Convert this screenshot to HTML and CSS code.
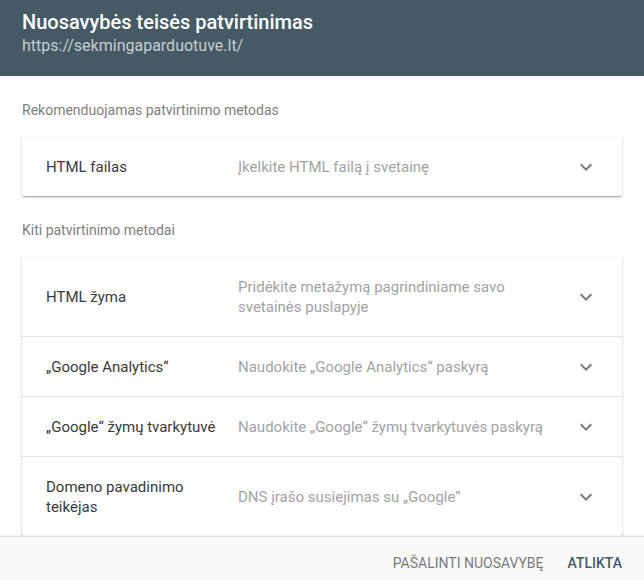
FILE: index.html
```html
<!DOCTYPE html>
<html lang="lt">
<head>
<meta charset="utf-8">
<link rel="stylesheet" href="styles.css">
</head>
<body>
<div class="dialog">
  <header class="head">
    <div class="title">Nuosavybės teisės patvirtinimas</div>
    <div class="url">https://sekmingaparduotuve.lt/</div>
  </header>
  <main class="content">
    <div class="section-label">Rekomenduojamas patvirtinimo metodas</div>
    <div class="card">
      <div class="row">
        <div class="name">HTML failas</div>
        <div class="desc">Įkelkite HTML failą į svetainę</div>
        <svg class="chev" viewBox="0 0 24 24"><path d="M7.41 8.59 12 13.17l4.59-4.58L18 10l-6 6-6-6z"/></svg>
      </div>
    </div>
    <div class="section-label">Kiti patvirtinimo metodai</div>
    <div class="card">
      <div class="row">
        <div class="name">HTML žyma</div>
        <div class="desc">Pridėkite metažymą pagrindiniame savo svetainės puslapyje</div>
        <svg class="chev" viewBox="0 0 24 24"><path d="M7.41 8.59 12 13.17l4.59-4.58L18 10l-6 6-6-6z"/></svg>
      </div>
      <div class="row">
        <div class="name">„Google Analytics“</div>
        <div class="desc">Naudokite „Google Analytics“ paskyrą</div>
        <svg class="chev" viewBox="0 0 24 24"><path d="M7.41 8.59 12 13.17l4.59-4.58L18 10l-6 6-6-6z"/></svg>
      </div>
      <div class="row">
        <div class="name">„Google“ žymų tvarkytuvė</div>
        <div class="desc">Naudokite „Google“ žymų tvarkytuvės paskyrą</div>
        <svg class="chev" viewBox="0 0 24 24"><path d="M7.41 8.59 12 13.17l4.59-4.58L18 10l-6 6-6-6z"/></svg>
      </div>
      <div class="row">
        <div class="name">Domeno pavadinimo teikėjas</div>
        <div class="desc">DNS įrašo susiejimas su „Google“</div>
        <svg class="chev" viewBox="0 0 24 24"><path d="M7.41 8.59 12 13.17l4.59-4.58L18 10l-6 6-6-6z"/></svg>
      </div>
    </div>
  </main>
  <footer class="foot">
    <button class="btn btn-secondary">Pašalinti nuosavybę</button>
    <button class="btn btn-primary">Atlikta</button>
  </footer>
</div>
</body>
</html>
```
FILE: styles.css
```css
html, body {
  margin: 0;
  padding: 0;
  height: 100%;
  background: #fff;
}
body {
  font-family: Roboto, "Noto Sans", Arial, sans-serif;
  color: #212121;
}
.dialog {
  height: 580px;
  display: flex;
  flex-direction: column;
  overflow: hidden;
}
.head {
  background: #455a64;
  height: 76px;
  box-sizing: border-box;
  padding: 9px 22px 0;
  flex: none;
}
.title {
  color: #fff;
  font-size: 20px;
  font-weight: 500;
  line-height: 26px;
}
.url {
  color: rgba(255,255,255,0.7);
  font-size: 16px;
  line-height: 22px;
}
.content {
  flex: 1;
  overflow: hidden;
  padding: 24px 22px 0;
  min-height: 0;
}
.section-label {
  font-size: 14px;
  line-height: 20px;
  color: #808080;
}
.section-label + .card { margin-top: 17px; }
.card + .section-label { margin-top: 24px; }
.card {
  background: #fff;
  box-shadow: 0 1px 3px rgba(0,0,0,0.2), 0 1px 1px rgba(0,0,0,0.14), 0 2px 1px -1px rgba(0,0,0,0.12);
  border-radius: 2px;
}
.row {
  display: flex;
  align-items: center;
  padding: 20px 24px 19px;
  font-size: 15px;
  line-height: 20px;
  border-top: 1px solid #e0e0e0;
}
.row:first-child { border-top: none; }
.name {
  width: 192px;
  flex: none;
  color: #3a3a3a;
}
.desc {
  flex: 1;
  color: #a3a3a3;
  padding-right: 8px;
}
.chev {
  width: 24px;
  height: 24px;
  margin: -2px 0;
  flex: none;
  fill: #7a7a7a;
}
.foot {
  flex: none;
  height: 44px;
  box-sizing: border-box;
  background: #fafafa;
  border-top: 1px solid #e0e0e0;
  box-shadow: 0 -1px 2px rgba(0,0,0,0.06);
  display: flex;
  justify-content: flex-end;
  align-items: flex-start;
  padding: 17px 14px 0 0;
  gap: 8px;
  position: relative;
}
.btn {
  background: none;
  border: none;
  font-family: inherit;
  font-size: 14px;
  text-transform: uppercase;
  padding: 0 8px;
  line-height: 18px;
  cursor: pointer;
}
.btn-secondary { color: #7a7a7a; }
.btn-primary { color: #455a64; font-weight: 500; }
```
